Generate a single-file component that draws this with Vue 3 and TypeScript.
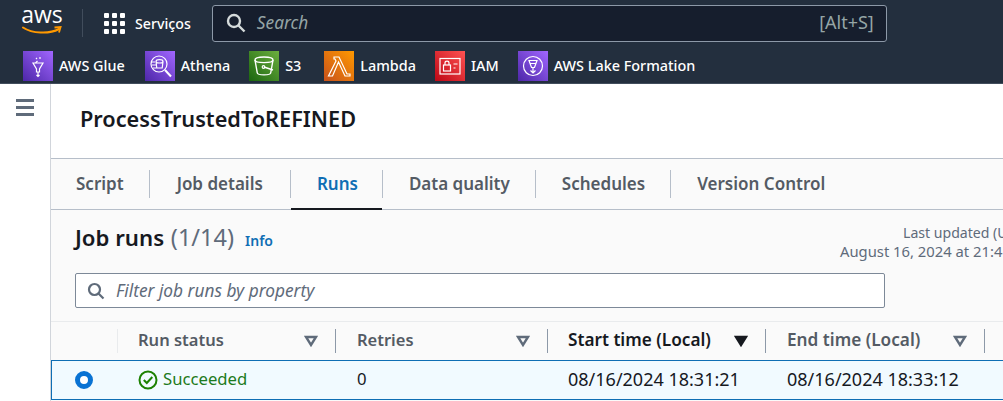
<script setup lang="ts">
interface Favorite {
  name: string
  icon: string
  tone: string
}

interface Column {
  label: string
  width: number
  active?: boolean
}

const favorites: Favorite[] = [
  { name: 'AWS Glue', icon: 'glue', tone: 'violet' },
  { name: 'Athena', icon: 'athena', tone: 'violet' },
  { name: 'S3', icon: 's3', tone: 'green' },
  { name: 'Lambda', icon: 'lambda', tone: 'orange' },
  { name: 'IAM', icon: 'iam', tone: 'red' },
  { name: 'AWS Lake Formation', icon: 'lake', tone: 'violet' },
]

const tabs = ['Script', 'Job details', 'Runs', 'Data quality', 'Schedules', 'Version Control']

const columns: Column[] = [
  { label: 'Run status', width: 218 },
  { label: 'Retries', width: 212 },
  { label: 'Start time (Local)', width: 218, active: true },
  { label: 'End time (Local)', width: 219 },
]
</script>

<template>
  <div class="page">
    <header class="top">
      <div class="top__main">
        <div class="logo">
          <span class="logo__text">aws</span>
          <svg class="logo__smile" width="40" height="10" viewBox="0 0 40 10">
            <path d="M1 1.500C10 7.500 27 8.500 37 3" fill="none" stroke="#f90" stroke-width="2" stroke-linecap="round" />
            <path d="M32.500 1.500 38.600 1 37 6.600" fill="none" stroke="#f90" stroke-width="1.800" />
          </svg>
        </div>
        <span class="top__sep"></span>
        <div class="grid-icon">
          <i v-for="n in 9" :key="n"></i>
        </div>
        <span class="top__services">Serviços</span>
        <div class="search">
          <svg width="20" height="20" viewBox="0 0 20 20" fill="none" stroke="#d5dbdb" stroke-width="2.400">
            <circle cx="8" cy="8" r="6" />
            <path d="m12.500 12.500 6 6" />
          </svg>
          <span class="search__text">Search</span>
          <span class="search__key">[Alt+S]</span>
        </div>
      </div>
      <nav class="favs">
        <div v-for="fav in favorites" :key="fav.name" class="fav">
          <span class="fav__icon" :class="'fav__icon--' + fav.tone">
            <svg width="30" height="30" viewBox="0 0 30 30" fill="none" stroke="#fff" stroke-width="1.200">
              <template v-if="fav.icon === 'glue'">
                <path d="M10 12h10l-3.500 6v3h-3v-3z" />
                <path d="M15 21v4M13.500 24l1.500 1.500 1.500-1.500M13 7l1 1M17 6v2M12.500 12l2-2" />
              </template>
              <template v-else-if="fav.icon === 'athena'">
                <circle cx="14" cy="13" r="8" />
                <path d="m20 19 6 6.500" stroke-width="2" />
                <path d="M11 10.500c0-2.500 7-2.500 7 0l-.8 6.500h-5.400zM11 10.500c0 2 7 2 7 0M6 11h4M7 14h4M8 17h4" />
              </template>
              <template v-else-if="fav.icon === 's3'">
                <path d="M6 9c0-4 18-4 18 0l-2.300 13c-.4 2.500-13 2.500-13.400 0z" stroke-width="1.400" />
                <path d="M6 9c0 3.500 18 3.500 18 0M15 16l9 3" stroke-width="1.400" />
                <circle cx="14.500" cy="16" r="1.300" />
              </template>
              <template v-else-if="fav.icon === 'lambda'">
                <path d="M10 6h5l8 17h3v2h-5l-6.500-14L8.500 25H4.500l7.500-15-1-2h-1z" />
              </template>
              <template v-else-if="fav.icon === 'iam'">
                <rect x="5" y="7.500" width="20" height="15.500" />
                <rect x="8.500" y="14" width="7" height="6" />
                <path d="M10 14v-2c0-2.500 4-2.500 4 0v2M18.500 13h4M18.500 17h2" />
              </template>
              <template v-else>
                <circle cx="15" cy="15" r="9.500" />
                <path d="M11 9.500h8l-2.500 7h-3zM15 16.500V22M12.500 19.500l2.500 2.500 2.500-2.500M11.500 12.500h7" />
              </template>
            </svg>
          </span>
          <span class="fav__name">{{ fav.name }}</span>
        </div>
      </nav>
    </header>

    <div class="body">
      <aside class="rail">
        <span class="rail__burger"><i></i><i></i><i></i></span>
      </aside>
      <main class="content">
        <h1 class="title">ProcessTrustedToREFINED</h1>
        <div class="tabs">
          <div v-for="tab in tabs" :key="tab" class="tab" :class="{ 'tab--active': tab === 'Runs' }">
            <span class="tab__label">{{ tab }}</span>
          </div>
        </div>
        <section class="runs">
          <div class="runs__head">
            <h2 class="runs__title">Job runs <span class="runs__count">(1/14)</span></h2>
            <a class="runs__info">Info</a>
            <div class="runs__updated">
              <div class="runs__updated-label">Last updated (U</div>
              <div>August 16, 2024 at 21:4</div>
            </div>
          </div>
          <div class="filter">
            <svg width="18" height="18" viewBox="0 0 18 18" fill="none" stroke="#5f6b7a" stroke-width="2.200">
              <circle cx="7.500" cy="7.500" r="5.500" />
              <path d="m11.500 11.500 5 5" />
            </svg>
            <span class="filter__text">Filter job runs by property</span>
          </div>
          <div class="table">
            <div class="thead">
              <div class="thead__radio"></div>
              <div
                v-for="col in columns"
                :key="col.label"
                class="th"
                :class="{ 'th--active': col.active }"
                :style="{ width: col.width + 'px' }"
              >
                <span class="th__label">{{ col.label }}</span>
                <svg width="14" height="12" viewBox="0 0 14 12">
                  <path
                    d="M2 2h10L7 10z"
                    :fill="col.active ? '#16191f' : 'none'"
                    :stroke="col.active ? '#16191f' : '#5f6b7a'"
                    stroke-width="2.400"
                  />
                </svg>
              </div>
            </div>
            <div class="row">
              <div class="row__radio"><span class="radio"></span></div>
              <div class="td td--ok" style="width: 219px">
                <svg width="20" height="20" viewBox="0 0 20 20" fill="none" stroke="#1d8102" stroke-width="2">
                  <circle cx="10" cy="10" r="8.500" />
                  <path d="m5.800 10 3 3 5.500-6" />
                </svg>
                <span class="td__text">Succeeded</span>
              </div>
              <div class="td" style="width: 212px"><span class="td__text">0</span></div>
              <div class="td td--date" style="width: 218px"><span class="td__text">08/16/2024 18:31:21</span></div>
              <div class="td td--date" style="width: 219px"><span class="td__text">08/16/2024 18:33:12</span></div>
            </div>
          </div>
        </section>
      </main>
    </div>
  </div>
</template>

<style>
html,
body {
  margin: 0;
  height: 401px;
  overflow: hidden;
  background: #fff;
}
</style>

<style scoped>
.page {
  width: 1003px;
  height: 401px;
  overflow: hidden;
  font-family: 'Noto Sans', 'Open Sans', sans-serif;
  color: #16191f;
}

.top {
  height: 84px;
  box-sizing: border-box;
  background: #232f3e;
  border-bottom: 1px solid #414d5c;
}

.top__main {
  display: flex;
  align-items: center;
  height: 46px;
  padding-left: 22px;
}

.logo {
  width: 40px;
  height: 32px;
  display: flex;
  flex-direction: column;
  align-items: center;
}

.logo__text {
  font-family: 'Open Sans', sans-serif;
  font-size: 23px;
  line-height: 22px;
  color: #fff;
  margin-top: -4px;
}

.logo__smile {
  margin-top: 1px;
}

.top__sep {
  width: 1px;
  height: 28px;
  margin-left: 20px;
  background: #414d5c;
}

.grid-icon {
  display: grid;
  grid-template-columns: repeat(3, 5px);
  grid-auto-rows: 5px;
  gap: 3px;
  margin-left: 21px;
}

.grid-icon i {
  background: #fff;
  border-radius: 1px;
}

.top__services {
  margin-left: 10px;
  font-size: 14.200px;
  font-weight: 500;
  color: #fff;
}

.search {
  display: flex;
  align-items: center;
  width: 675px;
  height: 37px;
  margin-left: 21px;
  padding: 0 12px 0 13px;
  box-sizing: border-box;
  background: #161e2d;
  border: 1px solid #8d99a8;
  border-radius: 3px;
}

.search__text {
  margin: 0 0 2px 11px;
  font-size: 17.300px;
  font-style: italic;
  color: #95a5a6;
}

.search__key {
  margin: 0 0 2px auto;
  font-size: 18px;
  color: #95a5a6;
}

.favs {
  display: flex;
  align-items: flex-start;
  height: 37px;
  padding: 5px 0 0 23px;
  box-sizing: border-box;
}

.fav {
  display: flex;
  align-items: center;
  margin-right: 19px;
}

.fav:nth-child(1) {
  margin-right: 20px;
}

.fav:nth-child(3) {
  margin-right: 23px;
}

.fav__icon {
  display: block;
  width: 30px;
  height: 30px;
}

.fav__icon svg {
  display: block;
}

.fav__icon--violet {
  background: linear-gradient(45deg, #4d27a8, #a166ff);
}

.fav__icon--green {
  background: linear-gradient(45deg, #1b660f, #6cae3e);
}

.fav__icon--orange {
  background: linear-gradient(45deg, #c8511b, #f90);
}

.fav__icon--red {
  background: linear-gradient(45deg, #bd0816, #ff5252);
}

.fav__name {
  margin: 0 0 2px 6px;
  font-size: 14.400px;
  font-weight: 500;
  color: #fff;
}

.body {
  display: flex;
  height: 317px;
}

.rail {
  flex: none;
  width: 50px;
  box-sizing: border-box;
  display: flex;
  justify-content: center;
  padding-top: 15px;
}

.rail__burger {
  display: flex;
  flex-direction: column;
  gap: 4px;
  width: 18px;
  height: 17px;
}

.rail__burger i {
  height: 3px;
  background: #5f6b7a;
}

.content {
  flex: 1;
  min-width: 0;
  border-left: 1px solid #d1d5db;
}

.title {
  height: 75px;
  margin: 0;
  box-sizing: border-box;
  padding: 20px 0 0 29px;
  font-size: 21.700px;
  line-height: 30px;
  font-weight: 600;
  color: #16191f;
  border-bottom: 1px solid #b6bec9;
}

.tabs {
  display: flex;
  align-items: center;
  height: 51px;
  box-sizing: border-box;
  background: #fafafa;
  border-bottom: 1px solid #b6bec9;
}

.tab {
  position: relative;
  display: flex;
  align-items: center;
  height: 28px;
  padding: 0 25px 0 26px;
  font-size: 17px;
  font-weight: 600;
  color: #545b64;
  border-right: 1px solid #b6bec9;
}

.tab__label {
  margin-bottom: 2px;
}

.tab:first-child {
  padding-left: 25px;
}

.tab:nth-child(2) {
  padding: 0 27px;
}

.tab:nth-child(3) {
  padding-right: 24px;
}

.tab:last-child {
  border-right: none;
}

.tab--active {
  color: #0f6eb4;
}

.tab--active::after {
  content: '';
  position: absolute;
  left: 0;
  right: 0;
  bottom: -12px;
  height: 2px;
  background: #16191f;
}

.runs {
  height: 191px;
  background: #fafafa;
}

.runs__head {
  display: flex;
  align-items: flex-start;
  height: 63px;
  padding: 12px 0 0 24px;
  box-sizing: border-box;
}

.runs__title {
  margin: 0;
  font-size: 22.200px;
  line-height: 30px;
  font-weight: 600;
  color: #16191f;
}

.runs__count {
  margin-left: 1px;
  font-size: 23.500px;
  font-weight: 400;
  color: #5f6b7a;
}

.runs__info {
  margin: 10px 0 0 11px;
  font-size: 14px;
  line-height: 18px;
  font-weight: 600;
  color: #0f6eb4;
}

.runs__updated {
  flex: none;
  width: 163px;
  margin-left: auto;
  margin-top: 1px;
  white-space: nowrap;
  font-size: 14.800px;
  line-height: 19px;
  color: #5f6b7a;
}

.runs__updated-label {
  padding-left: 63px;
  font-size: 14.100px;
}

.filter {
  display: flex;
  align-items: center;
  width: 810px;
  height: 35px;
  box-sizing: border-box;
  margin-left: 24px;
  padding-left: 11px;
  background: #fff;
  border: 1px solid #7d8998;
  border-radius: 2px;
}

.filter__text {
  margin-left: 11px;
  font-size: 17.300px;
  font-style: italic;
  color: #5f6b7a;
}

.table {
  margin-top: 13px;
  border-top: 1px solid #e9ebed;
}

.thead {
  display: flex;
  align-items: center;
  height: 38px;
  background: #fafafa;
}

.thead__radio {
  width: 67px;
  height: 24px;
  border-right: 1px solid #e9ebed;
  box-sizing: border-box;
}

.th {
  display: flex;
  align-items: center;
  justify-content: space-between;
  height: 24px;
  box-sizing: border-box;
  padding: 0 17px 0 20px;
  font-size: 16.500px;
  font-weight: 600;
  color: #545b64;
  border-right: 1px solid #8d99a8;
}

.th__label {
  margin-bottom: 3px;
}

.th:nth-child(3),
.th:last-child {
  padding-left: 21px;
}

.th:last-child {
  font-size: 17.200px;
}

.th--active {
  font-size: 17.200px;
  color: #16191f;
}

.row {
  display: flex;
  align-items: center;
  height: 40px;
  box-sizing: border-box;
  background: #f1faff;
  border-top: 1px solid #0f6eb4;
  border-bottom: 1px solid #0f6eb4;
  border-left: 1px solid #0f6eb4;
}

.row__radio {
  width: 65px;
  display: flex;
  padding-left: 23px;
  box-sizing: border-box;
}

.radio {
  width: 18px;
  height: 18px;
  box-sizing: border-box;
  border: 5px solid #0972d3;
  border-radius: 50%;
  background: #fff;
}

.td {
  display: flex;
  align-items: center;
  gap: 5px;
  box-sizing: border-box;
  padding-left: 21px;
  font-size: 16.700px;
  color: #16191f;
}

.td__text {
  margin-bottom: 3px;
}

.td--date {
  padding-left: 20px;
  font-size: 18px;
}

.td--date:last-child {
  padding-left: 21px;
}

.td--ok {
  color: #1d7a20;
}
</style>
